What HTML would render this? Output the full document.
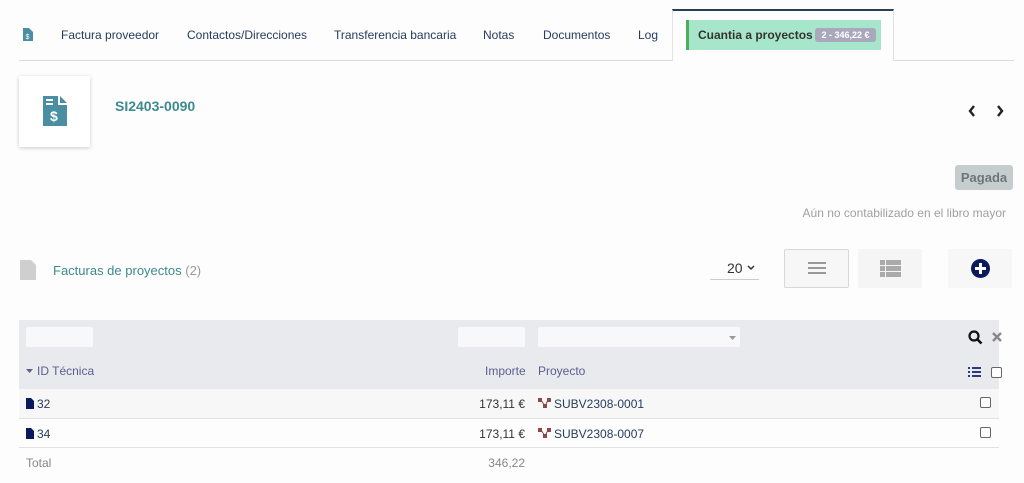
<!DOCTYPE html>
<html><head><meta charset="utf-8"><style>
body{margin:0;width:1024px;height:483px;background:#fdfdfd;font-family:"Liberation Sans",sans-serif;position:relative;overflow:hidden;color:#333}
.a{position:absolute;white-space:nowrap}
.tab{font-size:12px;color:#263c5c;top:28px}
</style></head><body>
<svg class="a" style="left:23px;top:28px" width="10" height="13" viewBox="0 0 10 13"><path d="M0 0h6l4 4v9H0z" fill="#4a8ea3"/><text x="2.5" y="11" font-size="7" fill="#fff" font-family="Liberation Sans">$</text></svg>
<div class="a tab" style="left:61px">Factura proveedor</div>
<div class="a tab" style="left:187px">Contactos/Direcciones</div>
<div class="a tab" style="left:334px">Transferencia bancaria</div>
<div class="a tab" style="left:483px">Notas</div>
<div class="a tab" style="left:543px">Documentos</div>
<div class="a tab" style="left:638px">Log</div>
<div class="a" style="left:19px;top:60px;width:995px;height:1px;background:#dcdcdc"></div>
<div class="a" style="left:672px;top:9px;width:222px;height:52px;border:1px solid #e2e2e2;border-top:2px solid #2c3e50;border-bottom:none;background:#fdfdfd;box-sizing:border-box"></div>
<div class="a" style="left:686px;top:20px;width:195px;height:30px;background:#a8e6cc;border-left:3px solid #4cae5c;box-sizing:border-box"></div>
<div class="a" style="left:698px;top:28px;font-size:12px;font-weight:bold;color:#333">Cuantia a proyectos</div>
<div class="a" style="left:815px;top:28px;width:61px;height:14px;background:#a9a8bd;border-radius:3px;color:#fff;font-size:9px;font-weight:bold;text-align:center;line-height:14px">2 - 346,22 €</div>
<div class="a" style="left:19px;top:76px;width:71px;height:71px;background:#fff;box-shadow:0 1px 4px rgba(0,0,0,.2)"></div>
<svg class="a" style="left:43px;top:96px" width="24" height="30" viewBox="0 0 24 30"><path d="M0 0h15v9h9v21H0z" fill="#4a8ea3"/><path d="M17 0l7 7h-7z" fill="#4a8ea3"/><rect x="3" y="3" width="7" height="2" fill="#fff"/><rect x="3" y="7" width="7" height="2" fill="#fff"/><text x="7" y="25" font-size="14" font-weight="bold" fill="#fff" font-family="Liberation Sans">$</text></svg>
<div class="a" style="left:115px;top:98px;font-size:14px;font-weight:bold;color:#3d8a8d">SI2403-0090</div>
<svg class="a" style="left:968px;top:105px" width="8" height="12"><path d="M6 1L2 6l4 5" stroke="#222" stroke-width="2.4" fill="none"/></svg>
<svg class="a" style="left:996px;top:105px" width="8" height="12"><path d="M2 1l4 5-4 5" stroke="#222" stroke-width="2.4" fill="none"/></svg>
<div class="a" style="left:955px;top:165px;width:58px;height:25px;background:#c6cdce;border-radius:3px;color:#6e7576;font-size:13px;font-weight:bold;text-align:center;line-height:25px">Pagada</div>
<div class="a" style="right:18px;top:206px;font-size:12px;color:#a0a0a0">Aún no contabilizado en el libro mayor</div>
<svg class="a" style="left:20px;top:260px" width="16" height="20" viewBox="0 0 16 20"><path d="M0 0h11l5 5v15H0z" fill="#cfcfcf"/></svg>
<div class="a" style="left:53px;top:263px;font-size:13px;color:#3d8a8d">Facturas de proyectos <span style="color:#999">(2)</span></div>
<div class="a" style="left:727px;top:260px;font-size:14px;color:#333">20</div>
<svg class="a" style="left:747px;top:265px" width="8" height="6"><path d="M1 1l3 3 3-3" stroke="#333" stroke-width="1.5" fill="none"/></svg>
<div class="a" style="left:710px;top:279px;width:49px;height:1px;background:#ccc"></div>
<div class="a" style="left:784px;top:249px;width:65px;height:39px;border:1px solid #d8d8d8;border-radius:2px;background:#f7f7f7;box-sizing:border-box"></div>
<div class="a" style="left:808px;top:262px;width:18px;height:2px;background:#999;box-shadow:0 5px #999,0 10px #999"></div>
<div class="a" style="left:858px;top:249px;width:64px;height:39px;background:#f5f5f5"></div>
<svg class="a" style="left:880px;top:260px" width="21" height="17"><rect width="5" height="5" fill="#aaa"/><rect x="6" width="15" height="5" fill="#aaa"/><rect y="6" width="5" height="5" fill="#aaa"/><rect x="6" y="6" width="15" height="5" fill="#aaa"/><rect y="12" width="5" height="5" fill="#aaa"/><rect x="6" y="12" width="15" height="5" fill="#aaa"/></svg>
<div class="a" style="left:948px;top:249px;width:64px;height:39px;background:#f7f7f7"></div>
<svg class="a" style="left:971px;top:259px" width="19" height="19" viewBox="0 0 19 19"><circle cx="9.5" cy="9.5" r="9.5" fill="#0a1a5c"/><rect x="4" y="8" width="11" height="3" fill="#fff"/><rect x="8" y="4" width="3" height="11" fill="#fff"/></svg>
<div class="a" style="left:19px;top:320px;width:980px;height:69px;background:#e9eaee"></div>
<div class="a" style="left:26px;top:327px;width:67px;height:20px;background:#f8f8fa;border-radius:2px"></div>
<div class="a" style="left:458px;top:327px;width:67px;height:20px;background:#f8f8fa;border-radius:2px"></div>
<div class="a" style="left:538px;top:327px;width:202px;height:20px;background:#f8f8fa;border-radius:2px"></div>
<svg class="a" style="left:729px;top:336px" width="7" height="4"><path d="M0 0h7L3.5 4z" fill="#999"/></svg>
<svg class="a" style="left:968px;top:330px" width="15" height="15" viewBox="0 0 15 15"><circle cx="6" cy="6" r="4.5" stroke="#111" stroke-width="2.2" fill="none"/><path d="M9.5 9.5l4 4" stroke="#111" stroke-width="2.6"/></svg>
<svg class="a" style="left:992px;top:332px" width="10" height="10"><path d="M1 1l8 8M9 1l-8 8" stroke="#888" stroke-width="2.4"/></svg>
<svg class="a" style="left:26px;top:369px" width="7" height="4"><path d="M0 0h7L3.5 4z" fill="#5a5f8e"/></svg>
<div class="a" style="left:37px;top:364px;font-size:12px;color:#5a5f8e">ID Técnica</div>
<div class="a" style="left:485px;top:364px;font-size:12px;color:#5a5f8e">Importe</div>
<div class="a" style="left:538px;top:364px;font-size:12px;color:#5a5f8e">Proyecto</div>
<svg class="a" style="left:968px;top:367px" width="13" height="11"><g fill="#2b3a82"><rect width="2" height="2"/><rect y="4" width="2" height="2"/><rect y="8" width="2" height="2"/><rect x="4" width="9" height="2"/><rect x="4" y="4" width="9" height="2"/><rect x="4" y="8" width="9" height="2"/></g></svg>
<div class="a" style="left:991px;top:367px;width:9px;height:9px;border:1px solid #666;border-radius:2px;background:#fff"></div>
<div class="a" style="left:19px;top:389px;width:980px;height:29px;background:#f7f7f7;border-bottom:1px solid #e2e2e2"></div>
<div class="a" style="left:19px;top:419px;width:980px;height:28px;border-bottom:1px solid #e2e2e2"></div>
<svg class="a" style="left:26px;top:398px" width="8" height="11"><path d="M0 0h5l3 3v8H0z" fill="#0a1a5c"/></svg>
<svg class="a" style="left:26px;top:428px" width="8" height="11"><path d="M0 0h5l3 3v8H0z" fill="#0a1a5c"/></svg>
<div class="a" style="left:37px;top:397px;font-size:12px;color:#263c5c">32</div>
<div class="a" style="left:37px;top:427px;font-size:12px;color:#263c5c">34</div>
<div class="a" style="right:499px;top:397px;font-size:12px;color:#333">173,11 €</div>
<div class="a" style="right:499px;top:427px;font-size:12px;color:#333">173,11 €</div>
<svg class="a" style="left:538px;top:398px" width="13" height="10"><g fill="#8a4a4a"><rect width="4" height="4"/><rect x="9" width="4" height="4"/><rect x="5" y="6" width="4" height="4"/><path d="M3 2l4 6M10 2l-3 6" stroke="#8a4a4a" stroke-width="1"/></g></svg>
<svg class="a" style="left:538px;top:428px" width="13" height="10"><g fill="#8a4a4a"><rect width="4" height="4"/><rect x="9" width="4" height="4"/><rect x="5" y="6" width="4" height="4"/><path d="M3 2l4 6M10 2l-3 6" stroke="#8a4a4a" stroke-width="1"/></g></svg>
<div class="a" style="left:554px;top:397px;font-size:12px;color:#263c5c">SUBV2308-0001</div>
<div class="a" style="left:554px;top:427px;font-size:12px;color:#263c5c">SUBV2308-0007</div>
<div class="a" style="left:980px;top:397px;width:9px;height:9px;border:1px solid #666;border-radius:2px;background:#fff"></div>
<div class="a" style="left:980px;top:427px;width:9px;height:9px;border:1px solid #666;border-radius:2px;background:#fff"></div>
<div class="a" style="left:26px;top:456px;font-size:12px;color:#888">Total</div>
<div class="a" style="right:499px;top:456px;font-size:12px;color:#888">346,22</div>
</body></html>
